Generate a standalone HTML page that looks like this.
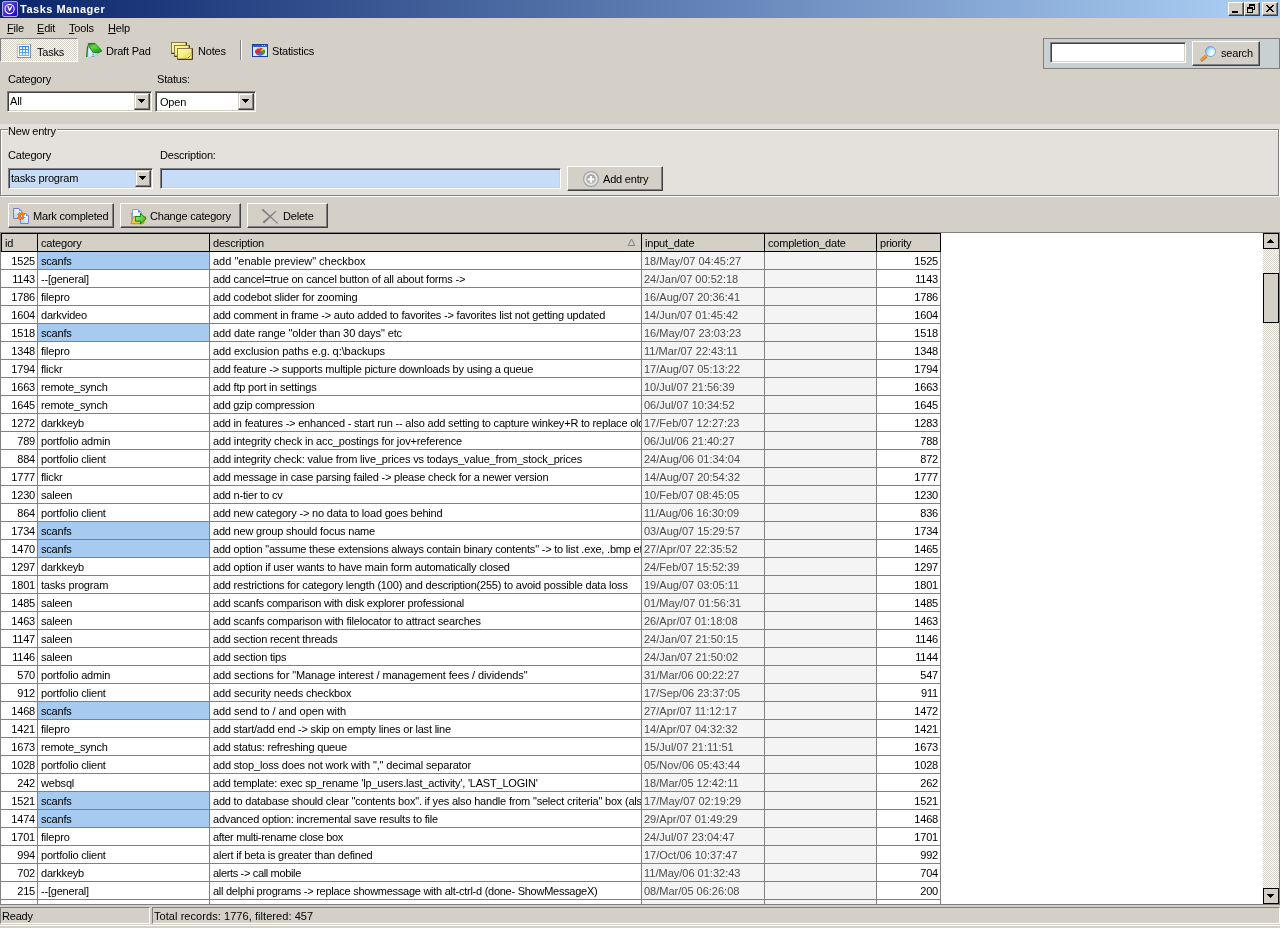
<!DOCTYPE html>
<html><head><meta charset="utf-8"><title>Tasks Manager</title>
<style>
html,body{margin:0;padding:0}
body{width:1280px;height:928px;overflow:hidden;background:#d4d0c8;position:relative;font:11px/13px "Liberation Sans",sans-serif;color:#000;letter-spacing:-0.2px}
.a{position:absolute;white-space:nowrap}
.t{position:absolute;white-space:nowrap;height:13px}
u{text-decoration:underline;text-decoration-thickness:1px;text-underline-offset:1px}
#title{left:0;top:0;width:1280px;height:18px;background:linear-gradient(to right,#0a246a 0,#a6caf0 1228px)}
#title b{position:absolute;left:20px;top:3px;color:#fff;font-weight:bold;letter-spacing:.5px}
.cb{position:absolute;top:2px;width:16px;height:14px;box-sizing:border-box;background:#d4d0c8;border:1px solid;border-color:#fff #404040 #404040 #fff;box-shadow:inset -1px -1px 0 #808080}
.btn{position:absolute;height:25px;box-sizing:border-box;background:#d4d0c8;border:1px solid;border-color:#fff #404040 #404040 #fff;box-shadow:inset -1px -1px 0 #808080}
.sunk{position:absolute;box-sizing:border-box;border:1px solid;border-color:#808080 #fff #fff #808080;box-shadow:inset 1px 1px 0 #404040,inset -1px -1px 0 #d4d0c8}
.dd{position:absolute;right:1px;top:1px;width:16px;height:17px;box-sizing:border-box;background:#d4d0c8;border:1px solid;border-color:#d4d0c8 #404040 #404040 #d4d0c8;box-shadow:inset -1px -1px 0 #808080,inset 1px 1px 0 #fff}
.dd svg{position:absolute;left:3px;top:5px}
.chk{background:repeating-conic-gradient(#fff 0% 25%,#d4d0c8 0% 50%) 0 0/2px 2px}
#grid{left:0;top:232px;width:1280px;height:673px;background:#fff;box-sizing:border-box;border:1px solid #808080;overflow:hidden}
#hdr{position:absolute;left:0;top:0;width:940px;height:19px;background:#000}
.hd{position:absolute;top:1px;height:17px;overflow:hidden;background:#d4d0c8;line-height:19px;padding-left:3px;box-sizing:border-box}
.r{position:absolute;left:0;height:17px;width:940px;border-bottom:1px solid #808080;line-height:19px}
.r span{position:absolute;top:0;height:17px;overflow:hidden;white-space:nowrap;border-right:1px solid #808080;box-sizing:content-box}
.c1{left:0;width:34px;text-align:right;padding-right:2px}
.c2{left:37px;width:168px;padding-left:3px}
.c3{left:209px;width:428px;padding-left:3px}
.c4{left:641px;width:120px;padding-left:2px;background:#f4f4f4;color:#4c4c4c;letter-spacing:0}
.c5{left:764px;width:111px;background:#f4f4f4}
.c6{left:876px;width:61px;text-align:right;padding-right:2px}
.s{background:#a6caf0}
#w{position:absolute;left:0;top:0;width:1280px;height:928px;overflow:hidden;will-change:transform}
</style></head><body><div id="w">

<div id="title" class="a">
<svg class="a" style="left:2px;top:1px" width="16" height="16" viewBox="0 0 16 16"><defs><linearGradient id="tg" x1="0" y1="0" x2="1" y2="1"><stop offset="0" stop-color="#6a58ec"/><stop offset="1" stop-color="#1a00c0"/></linearGradient></defs><rect x=".5" y=".5" width="15" height="15" rx="1.5" fill="url(#tg)" stroke="#b4a8f4"/><circle cx="7.6" cy="8" r="4.6" fill="none" stroke="#f4f0ff" stroke-width="1.1"/><path d="M6 5.6 L7.6 9.4 L9.6 5.8" fill="none" stroke="#fff" stroke-width="1.3" stroke-linecap="round" stroke-linejoin="round"/></svg>
<b>Tasks Manager</b>
<div class="cb" style="left:1228px"><svg class="a" style="left:0;top:0" width="14" height="12" shape-rendering="crispEdges"><rect x="3" y="8" width="6" height="2" fill="#000"/></svg></div>
<div class="cb" style="left:1244px"><svg class="a" style="left:0;top:0" width="14" height="12" shape-rendering="crispEdges"><path d="M4 1h6v2h-6zM4 3h1v1h-1zM9 3h1v4h-1zM8 6h1v1h-1zM2 4h6v2h-6zM2 6h1v4h-1zM7 6h1v4h-1zM3 9h4v1h-4z" fill="#000"/></svg></div>
<div class="cb" style="left:1262px"><svg class="a" style="left:0;top:0" width="14" height="12" shape-rendering="crispEdges"><path d="M3 2h2v1h-2zM9 2h2v1h-2zM4 3h2v1h-2zM8 3h2v1h-2zM5 4h4v1h-4zM6 5h2v1h-2zM5 6h4v1h-4zM4 7h2v1h-2zM8 7h2v1h-2zM3 8h2v1h-2zM9 8h2v1h-2z" fill="#000"/></svg></div>
</div>
<span class="t" style="left:7px;top:22px"><u>F</u>ile</span>
<span class="t" style="left:37px;top:22px"><u>E</u>dit</span>
<span class="t" style="left:69px;top:22px"><u>T</u>ools</span>
<span class="t" style="left:108px;top:22px"><u>H</u>elp</span>
<div class="a chk" style="left:0;top:38px;width:78px;height:24px;box-sizing:border-box;border:1px solid;border-color:#808080 #fff #fff #808080"></div>
<svg class="a" style="left:17px;top:44px" width="14" height="14" shape-rendering="crispEdges"><defs><linearGradient id="bg1" x1="0" y1="0" x2="0" y2="1"><stop offset="0" stop-color="#1e8cf0"/><stop offset="1" stop-color="#62bcff"/></linearGradient></defs><rect width="14" height="14" fill="#8c8c8c"/><rect width="13" height="13" fill="#c4c4c4"/><rect x="1" y="1" width="12" height="12" fill="#fff"/><rect x="2" y="2" width="10" height="10" fill="url(#bg1)"/><g fill="#fff"><rect x="3" y="3" width="2" height="2"/><rect x="6" y="3" width="2" height="2"/><rect x="9" y="3" width="2" height="2"/><rect x="3" y="6" width="2" height="2"/><rect x="6" y="6" width="2" height="2"/><rect x="9" y="6" width="2" height="2"/><rect x="3" y="9" width="2" height="2"/><rect x="6" y="9" width="2" height="2"/><rect x="9" y="9" width="2" height="2"/></g></svg>
<span class="t" style="left:37px;top:46px">Tasks</span>
<svg class="a" style="left:85px;top:42px" width="18" height="17" viewBox="0 0 18 17"><defs><linearGradient id="gg" x1=".2" y1="0" x2=".8" y2="1"><stop offset="0" stop-color="#2c9c20"/><stop offset=".35" stop-color="#68d840"/><stop offset="1" stop-color="#0c980c"/></linearGradient><linearGradient id="pg" x1="0" y1="0" x2="1" y2="1"><stop offset="0" stop-color="#ffffff"/><stop offset="1" stop-color="#a8d4f8"/></linearGradient></defs><path d="M3.400 5L8 10.500L12.600 10.700V13.600H10V14.500H6V15.400H3Z" fill="url(#pg)" stroke="#9cb8d8" stroke-width=".5"/><path d="M7.300 12.300h1.500M7.300 14.300h1.700" stroke="#506080" stroke-width=".7"/><path d="M2 4.200L3.300 3.400L2.400 15H1Z" fill="#0c8c0c"/><path d="M3.400 1.500L9.900 1.300L17 8.900L13.600 10.800L8.100 10.500L3.200 3.200Z" fill="url(#gg)" stroke="#0a7c0a" stroke-width=".8" stroke-linejoin="round"/><path d="M3.500 1.500L9.800 1.300L10.300 2L3.600 2.300Z" fill="#3c5c3c"/></svg>
<span class="t" style="left:106px;top:45px">Draft Pad</span>
<svg class="a" style="left:171px;top:42px" width="23" height="19" viewBox="0 0 23 19"><defs><linearGradient id="ng" x1="0" y1="0" x2="1" y2="1"><stop offset="0" stop-color="#ffff9c"/><stop offset=".5" stop-color="#f6ee84"/><stop offset="1" stop-color="#dcc048"/></linearGradient></defs><g transform="translate(0,0)"><rect x="0" y="0" width="16" height="12" rx="1" fill="#4c3a20"/><rect x="0" y="0" width="15" height="11" rx=".8" fill="#8c7850"/><rect x="1" y="1" width="13.500" height="9.500" fill="url(#ng)"/></g><g transform="translate(3,3)"><rect x="0" y="0" width="16" height="12" rx="1" fill="#4c3a20"/><rect x="0" y="0" width="15" height="11" rx=".8" fill="#8c7850"/><rect x="1" y="1" width="13.500" height="9.500" fill="url(#ng)"/></g><g transform="translate(6,6)"><rect x="0" y="0" width="16" height="12" rx="1" fill="#4c3a20"/><rect x="0" y="0" width="15" height="11" rx=".8" fill="#8c7850"/><rect x="1" y="1" width="13.500" height="9.500" fill="url(#ng)"/></g><rect x="16.500" y="12.500" width="4" height="4" fill="#fff47c"/><path d="M16.300 16.700V12.300H20.700" fill="none" stroke="#e8d878" stroke-width=".6"/><path d="M17 16L20 13" stroke="#4c3a20" stroke-width=".9" stroke-dasharray="1.200 .6"/></svg>
<span class="t" style="left:198px;top:45px">Notes</span>
<div class="a" style="left:240px;top:40px;width:1px;height:20px;background:#808080"></div><div class="a" style="left:241px;top:40px;width:1px;height:20px;background:#fff"></div>
<svg class="a" style="left:252px;top:44px" width="16" height="13" viewBox="0 0 16 13"><rect x=".5" y=".5" width="15" height="12" fill="#dce9fc" stroke="#1a3f9c"/><rect x="1" y="1" width="14" height="2" fill="#2a62d4"/><rect x="10" y="1" width="1" height="1" fill="#cfe0ff"/><rect x="12" y="1" width="1" height="1" fill="#cfe0ff"/><rect x="14" y="1" width="1" height="1" fill="#ff5030"/><ellipse cx="8" cy="7.6" rx="5" ry="3.8" fill="#d03020"/><path d="M8 7.6 L12.2 5.4 A5 3.8 0 0 1 11.2 10.6 Z" fill="#30a828"/><path d="M8 7.6 L11.2 10.6 A5 3.8 0 0 1 4 10 Z" fill="#5060d8"/><path d="M8 7.6 L10.4 4.3 A5 3.8 0 0 1 12.4 5.6 Z" fill="#f0d020"/><path d="M4.4 5.6 Q6 4.2 8.4 4.2" stroke="#f8a090" stroke-width=".9" fill="none"/></svg>
<span class="t" style="left:272px;top:45px">Statistics</span>
<div class="a" style="left:1043px;top:38px;width:237px;height:31px;box-sizing:border-box;background:#c9d0d1;border:1px solid #808080"></div>
<div class="sunk" style="left:1050px;top:42px;width:136px;height:21px;background:#fff"></div>
<div class="btn" style="left:1192px;top:41px;width:68px"></div>
<svg class="a" style="left:1198px;top:44px" width="20" height="20" viewBox="0 0 20 20"><defs><radialGradient id="lg" cx=".68" cy=".68" r=".75"><stop offset="0" stop-color="#ffffff"/><stop offset=".45" stop-color="#d0f6ff"/><stop offset="1" stop-color="#78b4f0"/></radialGradient></defs><path d="M2.800 16.800L8.400 12" stroke="#6c6cc8" stroke-width="3.200"/><path d="M2.600 16.400L8.200 11.600" stroke="#ff9818" stroke-width="2.600"/><circle cx="12.500" cy="7.500" r="5" fill="url(#lg)" stroke="#7484d4" stroke-width="1" stroke-dasharray="1.500 .5"/></svg>
<span class="t" style="left:1221px;top:47px">search</span>
<span class="t" style="left:8px;top:73px">Category</span>
<span class="t" style="left:157px;top:73px">Status:</span>
<div class="sunk" style="left:7px;top:91px;width:145px;height:21px;background:#fff"><div class="dd"><svg width="7" height="4" shape-rendering="crispEdges"><path d="M0 0h7v1h-7zM1 1h5v1h-5zM2 2h3v1h-3zM3 3h1v1h-1z" fill="#000"/></svg></div></div>
<span class="t" style="left:10px;top:95px">All</span>
<div class="sunk" style="left:155px;top:91px;width:101px;height:21px;background:#fff"><div class="dd"><svg width="7" height="4" shape-rendering="crispEdges"><path d="M0 0h7v1h-7zM1 1h5v1h-5zM2 2h3v1h-3zM3 3h1v1h-1z" fill="#000"/></svg></div></div>
<span class="t" style="left:160px;top:96px">Open</span>
<div class="a" style="left:0;top:124px;width:1280px;height:73px;background:#e4e1dc"></div>
<div class="a" style="left:0;top:129px;width:1279px;height:67px;box-sizing:border-box;border:1px solid #808080;box-shadow:1px 1px 0 #fff,inset 1px 1px 0 #fff"></div>
<span class="t" style="left:8px;top:125px;background:#e4e1dc;padding:0 1px 0 0">New entry</span>
<span class="t" style="left:8px;top:149px">Category</span>
<span class="t" style="left:160px;top:149px">Description:</span>
<div class="sunk" style="left:8px;top:168px;width:145px;height:21px;background:#c6dcf7"><div class="dd"><svg width="7" height="4" shape-rendering="crispEdges"><path d="M0 0h7v1h-7zM1 1h5v1h-5zM2 2h3v1h-3zM3 3h1v1h-1z" fill="#000"/></svg></div></div>
<span class="t" style="left:11px;top:172px">tasks program</span>
<div class="sunk" style="left:160px;top:168px;width:401px;height:21px;background:#c6dcf7"></div>
<div class="btn" style="left:567px;top:166px;width:96px"></div>
<svg class="a" style="left:583px;top:171px" width="16" height="16" viewBox="0 0 16 16"><defs><linearGradient id="ag" x1="0" y1="0" x2="0" y2="1"><stop offset="0" stop-color="#a0a0a0"/><stop offset="1" stop-color="#c0c0c0"/></linearGradient></defs><circle cx="8" cy="8" r="7.400" fill="#e6e6e6" stroke="#a2a2a2" stroke-width="1.200"/><circle cx="8" cy="8.200" r="4.900" fill="url(#ag)"/><path d="M8 5v6.400M4.800 8.200h6.400" stroke="#fff" stroke-width="1.900"/></svg>
<span class="t" style="left:603px;top:173px">Add entry</span>
<div class="btn" style="left:8px;top:203px;width:106px"></div>
<svg class="a" style="left:13px;top:208px" width="16" height="16" viewBox="0 0 16 16"><defs><linearGradient id="dg" x1="1" y1="0" x2="0" y2="1"><stop offset="0" stop-color="#ffffff"/><stop offset="1" stop-color="#a4d8fc"/></linearGradient></defs><path d="M.5 .5H6L8.500 3V10.500H.5Z" fill="url(#dg)" stroke="#7c7cd0"/><path d="M6 .5V3H8.500Z" fill="#5c9ce8"/><path d="M7.500 5.500H13L15.500 8V15.500H7.500Z" fill="url(#dg)" stroke="#7c7cd0"/><path d="M13 5.500V8H15.500Z" fill="#5c9ce8"/><path shape-rendering="crispEdges" d="M6 4h1v1h-1zM9 4h1v1h-1zM5 5h6v1h-6zM4 6h8v1h-8zM5 7h2v2h-2zM9 7h2v2h-2zM4 9h8v1h-8zM5 10h6v1h-6zM6 11h1v1h-1zM9 11h1v1h-1z" fill="#ff7c00"/></svg>
<span class="t" style="left:33px;top:210px">Mark completed</span>
<div class="btn" style="left:120px;top:203px;width:121px"></div>
<svg class="a" style="left:130px;top:208px" width="17" height="17" viewBox="0 0 17 17"><defs><linearGradient id="fg" x1="0" y1="0" x2="0" y2="1"><stop offset="0" stop-color="#ffe488"/><stop offset="1" stop-color="#f8c040"/></linearGradient><linearGradient id="arg" x1="0" y1="0" x2="1" y2="1"><stop offset="0" stop-color="#a4f070"/><stop offset="1" stop-color="#30b020"/></linearGradient></defs><path d="M.6 5.600H2V15.500" fill="none" stroke="#c89408" stroke-width="1.200"/><path d="M2.500 1.500H8L11.500 4.500V12.500H2.500Z" fill="#f4f8ff" stroke="#88a4e0"/><path d="M8 1.500V4.500H11.500Z" fill="#7088d8"/><path d="M1 15.700L3.600 8.600H15.800L13.400 15.700Z" fill="url(#fg)" stroke="#c89408" stroke-width="1"/><path d="M5.400 8.500H10.400V5.400L16.200 10.600L10.400 16V13.200H5.400Z" fill="url(#arg)" stroke="#0c8410" stroke-width="1" stroke-linejoin="miter"/></svg>
<span class="t" style="left:150px;top:210px">Change category</span>
<div class="btn" style="left:247px;top:203px;width:81px"></div>
<svg class="a" style="left:261px;top:208px" width="18" height="17" viewBox="0 0 18 17"><path d="M.6 2L1.900 .7L17.200 15.300L16.600 16Z" fill="#808080"/><path d="M14.700 2.700L15.400 3.400L3.100 15.600L1.400 14Z" fill="#808080"/></svg>
<span class="t" style="left:283px;top:210px">Delete</span>
<div id="grid" class="a"><div id="hdr">
<div class="hd" style="left:1px;width:35px">id</div>
<div class="hd" style="left:37px;width:171px">category</div>
<div class="hd" style="left:209px;width:431px">description</div>
<div class="hd" style="left:641px;width:122px">input_date</div>
<div class="hd" style="left:764px;width:111px">completion_date</div>
<div class="hd" style="left:876px;width:63px">priority</div>
<svg class="a" style="left:626px;top:5px" width="9" height="9" viewBox="0 0 9 9"><path d="M4.500 1L7.800 7.500H1.200Z" fill="none" stroke="#808080" stroke-width="1"/></svg>
</div>
<div class="r" style="top:19px"><span class="c1">1525</span><span class="c2 s">scanfs</span><span class="c3" style="letter-spacing:-0.007px">add "enable preview" checkbox</span><span class="c4">18/May/07 04:45:27</span><span class="c5"></span><span class="c6">1525</span></div>
<div class="r" style="top:37px"><span class="c1">1143</span><span class="c2">--[general]</span><span class="c3">add cancel=true on cancel button of all about forms -&gt;</span><span class="c4">24/Jan/07 00:52:18</span><span class="c5"></span><span class="c6">1143</span></div>
<div class="r" style="top:55px"><span class="c1">1786</span><span class="c2">filepro</span><span class="c3">add codebot slider for zooming</span><span class="c4">16/Aug/07 20:36:41</span><span class="c5"></span><span class="c6">1786</span></div>
<div class="r" style="top:73px"><span class="c1">1604</span><span class="c2">darkvideo</span><span class="c3">add comment in frame -&gt; auto added to favorites -&gt; favorites list not getting updated</span><span class="c4">14/Jun/07 01:45:42</span><span class="c5"></span><span class="c6">1604</span></div>
<div class="r" style="top:91px"><span class="c1">1518</span><span class="c2 s">scanfs</span><span class="c3" style="letter-spacing:-0.105px">add date range "older than 30 days" etc</span><span class="c4">16/May/07 23:03:23</span><span class="c5"></span><span class="c6">1518</span></div>
<div class="r" style="top:109px"><span class="c1">1348</span><span class="c2">filepro</span><span class="c3" style="letter-spacing:-0.083px">add exclusion paths e.g. q:\backups</span><span class="c4">11/Mar/07 22:43:11</span><span class="c5"></span><span class="c6">1348</span></div>
<div class="r" style="top:127px"><span class="c1">1794</span><span class="c2">flickr</span><span class="c3">add feature -&gt; supports multiple picture downloads by using a queue</span><span class="c4">17/Aug/07 05:13:22</span><span class="c5"></span><span class="c6">1794</span></div>
<div class="r" style="top:145px"><span class="c1">1663</span><span class="c2">remote_synch</span><span class="c3">add ftp port in settings</span><span class="c4">10/Jul/07 21:56:39</span><span class="c5"></span><span class="c6">1663</span></div>
<div class="r" style="top:163px"><span class="c1">1645</span><span class="c2">remote_synch</span><span class="c3" style="letter-spacing:-0.290px">add gzip compression</span><span class="c4">06/Jul/07 10:34:52</span><span class="c5"></span><span class="c6">1645</span></div>
<div class="r" style="top:181px"><span class="c1">1272</span><span class="c2">darkkeyb</span><span class="c3">add in features -&gt; enhanced - start run -- also add setting to capture winkey+R to replace old</span><span class="c4">17/Feb/07 12:27:23</span><span class="c5"></span><span class="c6">1283</span></div>
<div class="r" style="top:199px"><span class="c1">789</span><span class="c2">portfolio admin</span><span class="c3" style="letter-spacing:-0.142px">add integrity check in acc_postings for jov+reference</span><span class="c4">06/Jul/06 21:40:27</span><span class="c5"></span><span class="c6">788</span></div>
<div class="r" style="top:217px"><span class="c1">884</span><span class="c2">portfolio client</span><span class="c3" style="letter-spacing:-0.162px">add integrity check: value from live_prices vs todays_value_from_stock_prices</span><span class="c4">24/Aug/06 01:34:04</span><span class="c5"></span><span class="c6">872</span></div>
<div class="r" style="top:235px"><span class="c1">1777</span><span class="c2">flickr</span><span class="c3">add message in case parsing failed -&gt; please check for a newer version</span><span class="c4">14/Aug/07 20:54:32</span><span class="c5"></span><span class="c6">1777</span></div>
<div class="r" style="top:253px"><span class="c1">1230</span><span class="c2">saleen</span><span class="c3">add n-tier to cv</span><span class="c4">10/Feb/07 08:45:05</span><span class="c5"></span><span class="c6">1230</span></div>
<div class="r" style="top:271px"><span class="c1">864</span><span class="c2">portfolio client</span><span class="c3">add new category -&gt; no data to load goes behind</span><span class="c4">11/Aug/06 16:30:09</span><span class="c5"></span><span class="c6">836</span></div>
<div class="r" style="top:289px"><span class="c1">1734</span><span class="c2 s">scanfs</span><span class="c3">add new group should focus name</span><span class="c4">03/Aug/07 15:29:57</span><span class="c5"></span><span class="c6">1734</span></div>
<div class="r" style="top:307px"><span class="c1">1470</span><span class="c2 s">scanfs</span><span class="c3">add option "assume these extensions always contain binary contents" -&gt; to list .exe, .bmp etc</span><span class="c4">27/Apr/07 22:35:52</span><span class="c5"></span><span class="c6">1465</span></div>
<div class="r" style="top:325px"><span class="c1">1297</span><span class="c2">darkkeyb</span><span class="c3">add option if user wants to have main form automatically closed</span><span class="c4">24/Feb/07 15:52:39</span><span class="c5"></span><span class="c6">1297</span></div>
<div class="r" style="top:343px"><span class="c1">1801</span><span class="c2">tasks program</span><span class="c3">add restrictions for category length (100) and description(255) to avoid possible data loss</span><span class="c4">19/Aug/07 03:05:11</span><span class="c5"></span><span class="c6">1801</span></div>
<div class="r" style="top:361px"><span class="c1">1485</span><span class="c2">saleen</span><span class="c3" style="letter-spacing:-0.236px">add scanfs comparison with disk explorer professional</span><span class="c4">01/May/07 01:56:31</span><span class="c5"></span><span class="c6">1485</span></div>
<div class="r" style="top:379px"><span class="c1">1463</span><span class="c2">saleen</span><span class="c3">add scanfs comparison with filelocator to attract searches</span><span class="c4">26/Apr/07 01:18:08</span><span class="c5"></span><span class="c6">1463</span></div>
<div class="r" style="top:397px"><span class="c1">1147</span><span class="c2">saleen</span><span class="c3">add section recent threads</span><span class="c4">24/Jan/07 21:50:15</span><span class="c5"></span><span class="c6">1146</span></div>
<div class="r" style="top:415px"><span class="c1">1146</span><span class="c2">saleen</span><span class="c3">add section tips</span><span class="c4">24/Jan/07 21:50:02</span><span class="c5"></span><span class="c6">1144</span></div>
<div class="r" style="top:433px"><span class="c1">570</span><span class="c2">portfolio admin</span><span class="c3" style="letter-spacing:-0.091px">add sections for "Manage interest / management fees / dividends"</span><span class="c4">31/Mar/06 00:22:27</span><span class="c5"></span><span class="c6">547</span></div>
<div class="r" style="top:451px"><span class="c1">912</span><span class="c2">portfolio client</span><span class="c3" style="letter-spacing:-0.126px">add security needs checkbox</span><span class="c4">17/Sep/06 23:37:05</span><span class="c5"></span><span class="c6">911</span></div>
<div class="r" style="top:469px"><span class="c1">1468</span><span class="c2 s">scanfs</span><span class="c3" style="letter-spacing:-0.081px">add send to / and open with</span><span class="c4">27/Apr/07 11:12:17</span><span class="c5"></span><span class="c6">1472</span></div>
<div class="r" style="top:487px"><span class="c1">1421</span><span class="c2">filepro</span><span class="c3">add start/add end -&gt; skip on empty lines or last line</span><span class="c4">14/Apr/07 04:32:32</span><span class="c5"></span><span class="c6">1421</span></div>
<div class="r" style="top:505px"><span class="c1">1673</span><span class="c2">remote_synch</span><span class="c3">add status: refreshing queue</span><span class="c4">15/Jul/07 21:11:51</span><span class="c5"></span><span class="c6">1673</span></div>
<div class="r" style="top:523px"><span class="c1">1028</span><span class="c2">portfolio client</span><span class="c3" style="letter-spacing:-0.157px">add stop_loss does not work with "," decimal separator</span><span class="c4">05/Nov/06 05:43:44</span><span class="c5"></span><span class="c6">1028</span></div>
<div class="r" style="top:541px"><span class="c1">242</span><span class="c2">websql</span><span class="c3">add template: exec sp_rename 'lp_users.last_activity', 'LAST_LOGIN'</span><span class="c4">18/Mar/05 12:42:11</span><span class="c5"></span><span class="c6">262</span></div>
<div class="r" style="top:559px"><span class="c1">1521</span><span class="c2 s">scanfs</span><span class="c3">add to database should clear "contents box". if yes also handle from "select criteria" box (also</span><span class="c4">17/May/07 02:19:29</span><span class="c5"></span><span class="c6">1521</span></div>
<div class="r" style="top:577px"><span class="c1">1474</span><span class="c2 s">scanfs</span><span class="c3">advanced option: incremental save results to file</span><span class="c4">29/Apr/07 01:49:29</span><span class="c5"></span><span class="c6">1468</span></div>
<div class="r" style="top:595px"><span class="c1">1701</span><span class="c2">filepro</span><span class="c3" style="letter-spacing:-0.314px">after multi-rename close box</span><span class="c4">24/Jul/07 23:04:47</span><span class="c5"></span><span class="c6">1701</span></div>
<div class="r" style="top:613px"><span class="c1">994</span><span class="c2">portfolio client</span><span class="c3">alert if beta is greater than defined</span><span class="c4">17/Oct/06 10:37:47</span><span class="c5"></span><span class="c6">992</span></div>
<div class="r" style="top:631px"><span class="c1">702</span><span class="c2">darkkeyb</span><span class="c3" style="letter-spacing:-0.338px">alerts -&gt; call mobile</span><span class="c4">11/May/06 01:32:43</span><span class="c5"></span><span class="c6">704</span></div>
<div class="r" style="top:649px"><span class="c1">215</span><span class="c2">--[general]</span><span class="c3" style="letter-spacing:-0.261px">all delphi programs -&gt; replace showmessage with alt-ctrl-d (done- ShowMessageX)</span><span class="c4">08/Mar/05 06:26:08</span><span class="c5"></span><span class="c6">200</span></div>
<div class="r" style="top:667px"><span class="c1"></span><span class="c2"></span><span class="c3"></span><span class="c4"></span><span class="c5"></span><span class="c6"></span></div>
<div class="a chk" style="left:1262px;top:0;width:16px;height:671px"></div>
<div class="a" style="left:1262px;top:0;width:16px;height:16px;box-sizing:border-box;border:1px solid #000;background:#d4d0c8"><svg class="a" style="left:3px;top:5px" width="7" height="4" shape-rendering="crispEdges"><path d="M3 0h1v1h-1zM2 1h3v1h-3zM1 2h5v1h-5zM0 3h7v1h-7z" fill="#000"/></svg></div>
<div class="a" style="left:1262px;top:40px;width:16px;height:50px;box-sizing:border-box;border:1px solid #000;background:#d4d0c8"></div>
<div class="a" style="left:1262px;top:655px;width:16px;height:16px;box-sizing:border-box;border:1px solid #000;background:#d4d0c8"><svg class="a" style="left:3px;top:5px" width="7" height="4" shape-rendering="crispEdges"><path d="M0 0h7v1h-7zM1 1h5v1h-5zM2 2h3v1h-3zM3 3h1v1h-1z" fill="#000"/></svg></div>
</div>
<div class="a" style="left:0;top:907px;width:150px;height:17px;box-sizing:border-box;border:1px solid;border-color:#808080 #fff #fff #808080"></div>
<div class="a" style="left:152px;top:907px;width:1128px;height:17px;box-sizing:border-box;border:1px solid;border-color:#808080 #fff #fff #808080"></div>
<span class="t" style="left:2px;top:910px">Ready</span>
<span class="t" style="left:154px;top:910px;letter-spacing:.06px">Total records: 1776, filtered: 457</span>
<div class="a" style="left:0;top:925px;width:1280px;height:1px;background:#fff"></div>
</div></body></html>
